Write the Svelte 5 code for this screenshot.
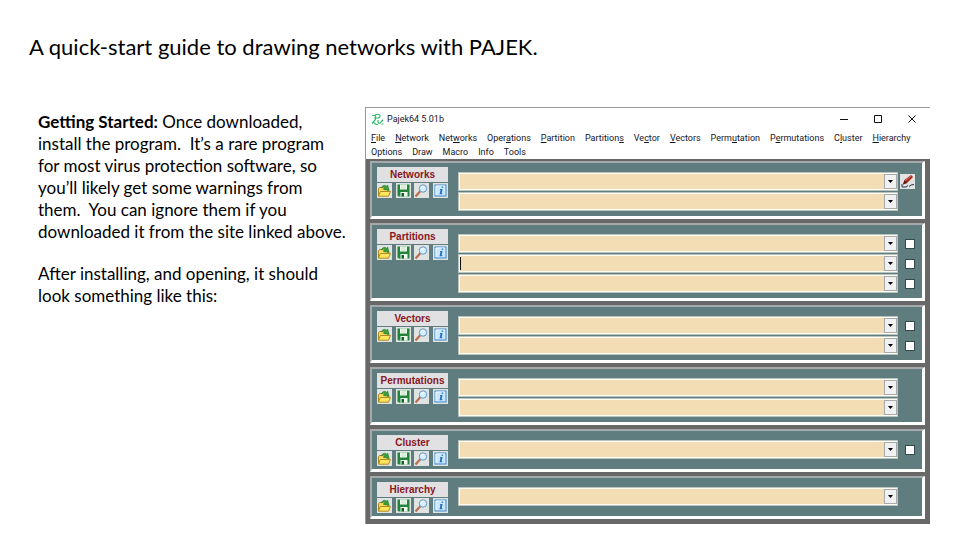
<script>
  const menuRows = [
    [
      ['', 'F', 'ile'], ['', 'N', 'etwork'], ['Net', 'w', 'orks'], ['Oper', 'a', 'tions'],
      ['', 'P', 'artition'], ['Partition', 's', ''], ['Ve', 'c', 'tor'], ['', 'V', 'ectors'],
      ['Perm', 'u', 'tation'], ['P', 'e', 'rmutations'], ['C', 'l', 'uster'], ['', 'H', 'ierarchy']
    ],
    [['Options', '', ''], ['Draw', '', ''], ['Macro', '', ''], ['Info', '', ''], ['Tools', '', '']]
  ];
  const panels = [
    { name: 'Networks', rows: 2, checks: false, draw: true },
    { name: 'Partitions', rows: 3, checks: true },
    { name: 'Vectors', rows: 2, checks: true },
    { name: 'Permutations', rows: 2, checks: false },
    { name: 'Cluster', rows: 1, checks: true },
    { name: 'Hierarchy', rows: 1, checks: false }
  ];
  const tools = ['Open', 'Save', 'View', 'Info'];
</script>

<main>
  <h1>A quick-start guide to drawing networks with PAJEK.</h1>
  <div class="content">
    <section class="copy">
      <p><strong>Getting Started:</strong> Once downloaded,<br />install the program.&nbsp; It’s a rare program<br />for most virus protection software, so<br />you’ll likely get some warnings from<br />them.&nbsp; You can ignore them if you<br />downloaded it from the site linked above.</p>
      <p>After installing, and opening, it should<br />look something like this:</p>
    </section>

    <section class="window" aria-label="Pajek64 5.01b">
      <header>
        <svg class="logo" viewBox="0 0 13 13" aria-hidden="true">
          <path d="M1 2.500h3M4.500 1.500h3.500c2 1 1 3-1 3.500H3M4.500 1.500v5L1 10.500M2 9l3 2.500h2M7 7v2l1.500 2M9 10.500l3-4M10 8h2M10.500 11h2" fill="none" stroke="#2fc06c" stroke-width="1.200" />
        </svg>
        <span class="title">Pajek64 5.01b</span>
        <div class="controls">
          <button aria-label="Minimize"><svg viewBox="0 0 10 10"><path d="M1 5.500h8" /></svg></button>
          <button aria-label="Maximize"><svg viewBox="0 0 10 10"><path d="M1.500 1.500h7v7h-7z" /></svg></button>
          <button aria-label="Close"><svg viewBox="0 0 10 10"><path d="M1.500 1.500l7 7M8.500 1.500l-7 7" /></svg></button>
        </div>
      </header>
      <nav>
        {#each menuRows as row}
          <div class="menu">
            {#each row as [before, key, after]}
              <button>{before}{#if key}<u>{key}</u>{/if}{after}</button>
            {/each}
          </div>
        {/each}
      </nav>

      <div class="panels">
        {#each panels as panel}
          <div class="panel">
            <div class="side">
              <button class="name">{panel.name}</button>
              <div class="tools">
                {#each tools as tool}
                  <button class="tool" aria-label="{tool} {panel.name}">
                    <svg viewBox="0 0 15 15">
                      {#if tool === 'Open'}
                        <path d="M1.500 13.200V5.800l1-1.300h3l1 1.300h4.500v2.500" fill="#f8df62" stroke="#ad8620" />
                        <path d="M1.500 13.200l1.800-4.700h10.200l-2 4.700z" fill="#ffe65c" stroke="#b48a21" />
                        <path d="M4.500 5C5 2.300 8 1.500 9.500 3.200l1.200-1.200 1.500 5.500-5.700-1 1.400-1.400C7 4 5.500 4 4.500 5z" fill="#38a038" stroke="#247326" stroke-width=".5" />
                      {:else if tool === 'Save'}
                        <path d="M1.500 1.500h12v12h-11l-1-1z" fill="#23833a" />
                        <path d="M4 1.500h7v5H4zM4.500 9h7v4.500h-7z" fill="#f4fff3" />
                        <path d="M5 3h5M5 5h5" stroke="#a8cda8" stroke-width=".7" />
                        <path d="M5.500 10H8v3.500H5.500z" fill="#175d29" />
                      {:else if tool === 'View'}
                        <path d="M1.500 13.500l5-5.500" stroke="#b96f52" stroke-width="2.200" />
                        <circle cx="9" cy="5.500" r="3.700" fill="#d6f0ff" stroke="#6a96c0" />
                        <path d="M7 5.300q.6-2 2.500-2" fill="none" stroke="#fff" />
                      {:else}
                        <rect x="2" y="2" width="11" height="11" fill="#c9e8fd" stroke="#3e88cf" />
                        <path d="M3 12V3h9" fill="none" stroke="#f0faff" />
                        <path d="M8.700 3.500h1.600l-.3 1.300H8.400zM7.300 6h2.300l-1 4.300h.9l-.2.900H6.500l1-4.300h-.6z" fill="#2470bd" />
                      {/if}
                    </svg>
                  </button>
                {/each}
              </div>
            </div>
            <div class="rows">
              {#each { length: panel.rows } as _, i}
                <div class="row">
                  <div class="combo">
                    <select aria-label="{panel.name} {i + 1}"></select>
                    {#if panel.name === 'Partitions' && i === 1}<span class="caret"></span>{/if}
                    <span class="arrow"><svg viewBox="0 0 5 3"><path d="M0 0h5L2.500 3z" /></svg></span>
                  </div>
                  <div class="extra">
                    {#if panel.checks}
                      <input type="checkbox" aria-label="Use {panel.name} {i + 1}" />
                    {:else if panel.draw && i === 0}
                      <button class="tool" aria-label="Draw network">
                        <svg viewBox="0 0 15 15">
                          <path d="M3 10.500L4.500 6 11 1l2 2-6 6z" fill="#a32619" />
                          <path d="M5 7l6-5" stroke="#e07660" />
                          <path d="M3 10.500L4.500 6l2.500 3z" fill="#5d1e18" />
                          <path d="M2 10v3h4l2-1.500M9 12.500l2-1.500 3-.5" fill="none" stroke="#29324b" />
                        </svg>
                      </button>
                    {/if}
                  </div>
                </div>
              {/each}
            </div>
          </div>
        {/each}
      </div>
    </section>
  </div>
</main>

<style>
  :global(body) { margin: 0; background: #fff; }
  main { box-sizing: border-box; padding: 32px 30px 16px 29px; color: #000; font-family: Lato, 'Open Sans', sans-serif; }
  h1 { margin: 0; font-size: 22px; line-height: 30px; font-weight: 400; }
  .content { display: flex; align-items: flex-start; padding-top: 45px; }
  .copy { flex: 0 0 327px; margin-left: 9px; padding-top: 4px; font-size: 17px; line-height: 22px; white-space: nowrap; }
  p { margin: 0 0 20px; }
  button { border: 0; padding: 0; margin: 0; background: none; color: inherit; font: inherit; }
  svg { display: block; }
  .window { flex: 1; min-width: 0; border: 1px solid #999; border-right: 0; border-bottom: 0; font-family: Roboto, 'Open Sans', sans-serif; font-size: 9px; color: #15151f; }
  header { display: flex; align-items: center; height: 22px; padding-left: 5px; }
  .logo { width: 13px; height: 13px; margin-right: 3px; }
  .controls { display: flex; gap: 24px; margin-left: auto; padding-right: 13px; }
  .controls svg { width: 10px; height: 10px; fill: none; stroke: #111; stroke-width: 1; }
  nav { padding-top: 1px; }
  .menu { display: flex; gap: 10px; height: 14px; padding-left: 5px; line-height: 14px; white-space: nowrap; }
  u { text-underline-offset: 1px; }
  .panels { display: flex; flex-direction: column; gap: 4px; padding: 2px 5px 5px 4px; background: #686868; }
  .panel { display: flex; gap: 10px; padding: 4px 7px 2px 5px; background: #5f7d7f; border: 2px solid #a5a9ab; border-right: 3px solid #fff; border-bottom: 3px solid #fff; }
  .side { flex: 0 0 71px; padding-bottom: 1px; }
  .name { display: block; width: 100%; height: 15px; background: #e1e1e3; color: #87161d; font: bold 10px/15px 'Liberation Sans', Arial, sans-serif; }
  .tools { display: flex; justify-content: space-between; margin-top: 1px; }
  .tool { width: 15px; height: 15px; background: #dfe3e1; }
  .tool svg { width: 15px; height: 15px; }
  .rows { flex: 1; display: flex; flex-direction: column; gap: 1px; padding: 5px 0 3px; }
  .row { display: flex; align-items: center; gap: 2px; }
  .combo { position: relative; flex: 1; height: 19px; }
  select { appearance: none; display: block; box-sizing: border-box; width: 100%; height: 19px; margin: 0; border: 1px solid #b9c4c0; border-radius: 0; background: #f3ddb4; box-shadow: inset 0 0 0 1px #fffdf2; outline: 0; }
  .arrow { position: absolute; top: 2px; right: 1px; display: grid; place-items: center; width: 13px; height: 15px; box-sizing: border-box; background: #f1f1f1; border: 1px solid #a7aaac; pointer-events: none; }
  .arrow svg { width: 5px; height: 3px; }
  .caret { position: absolute; left: 2px; top: 3px; width: 1px; height: 13px; background: #111; pointer-events: none; }
  .extra { display: grid; align-items: center; justify-items: end; width: 15px; height: 15px; }
  input { appearance: none; width: 10px; height: 10px; margin: 0; box-sizing: border-box; border: 1px solid #334a4c; background: #fff; }
</style>
